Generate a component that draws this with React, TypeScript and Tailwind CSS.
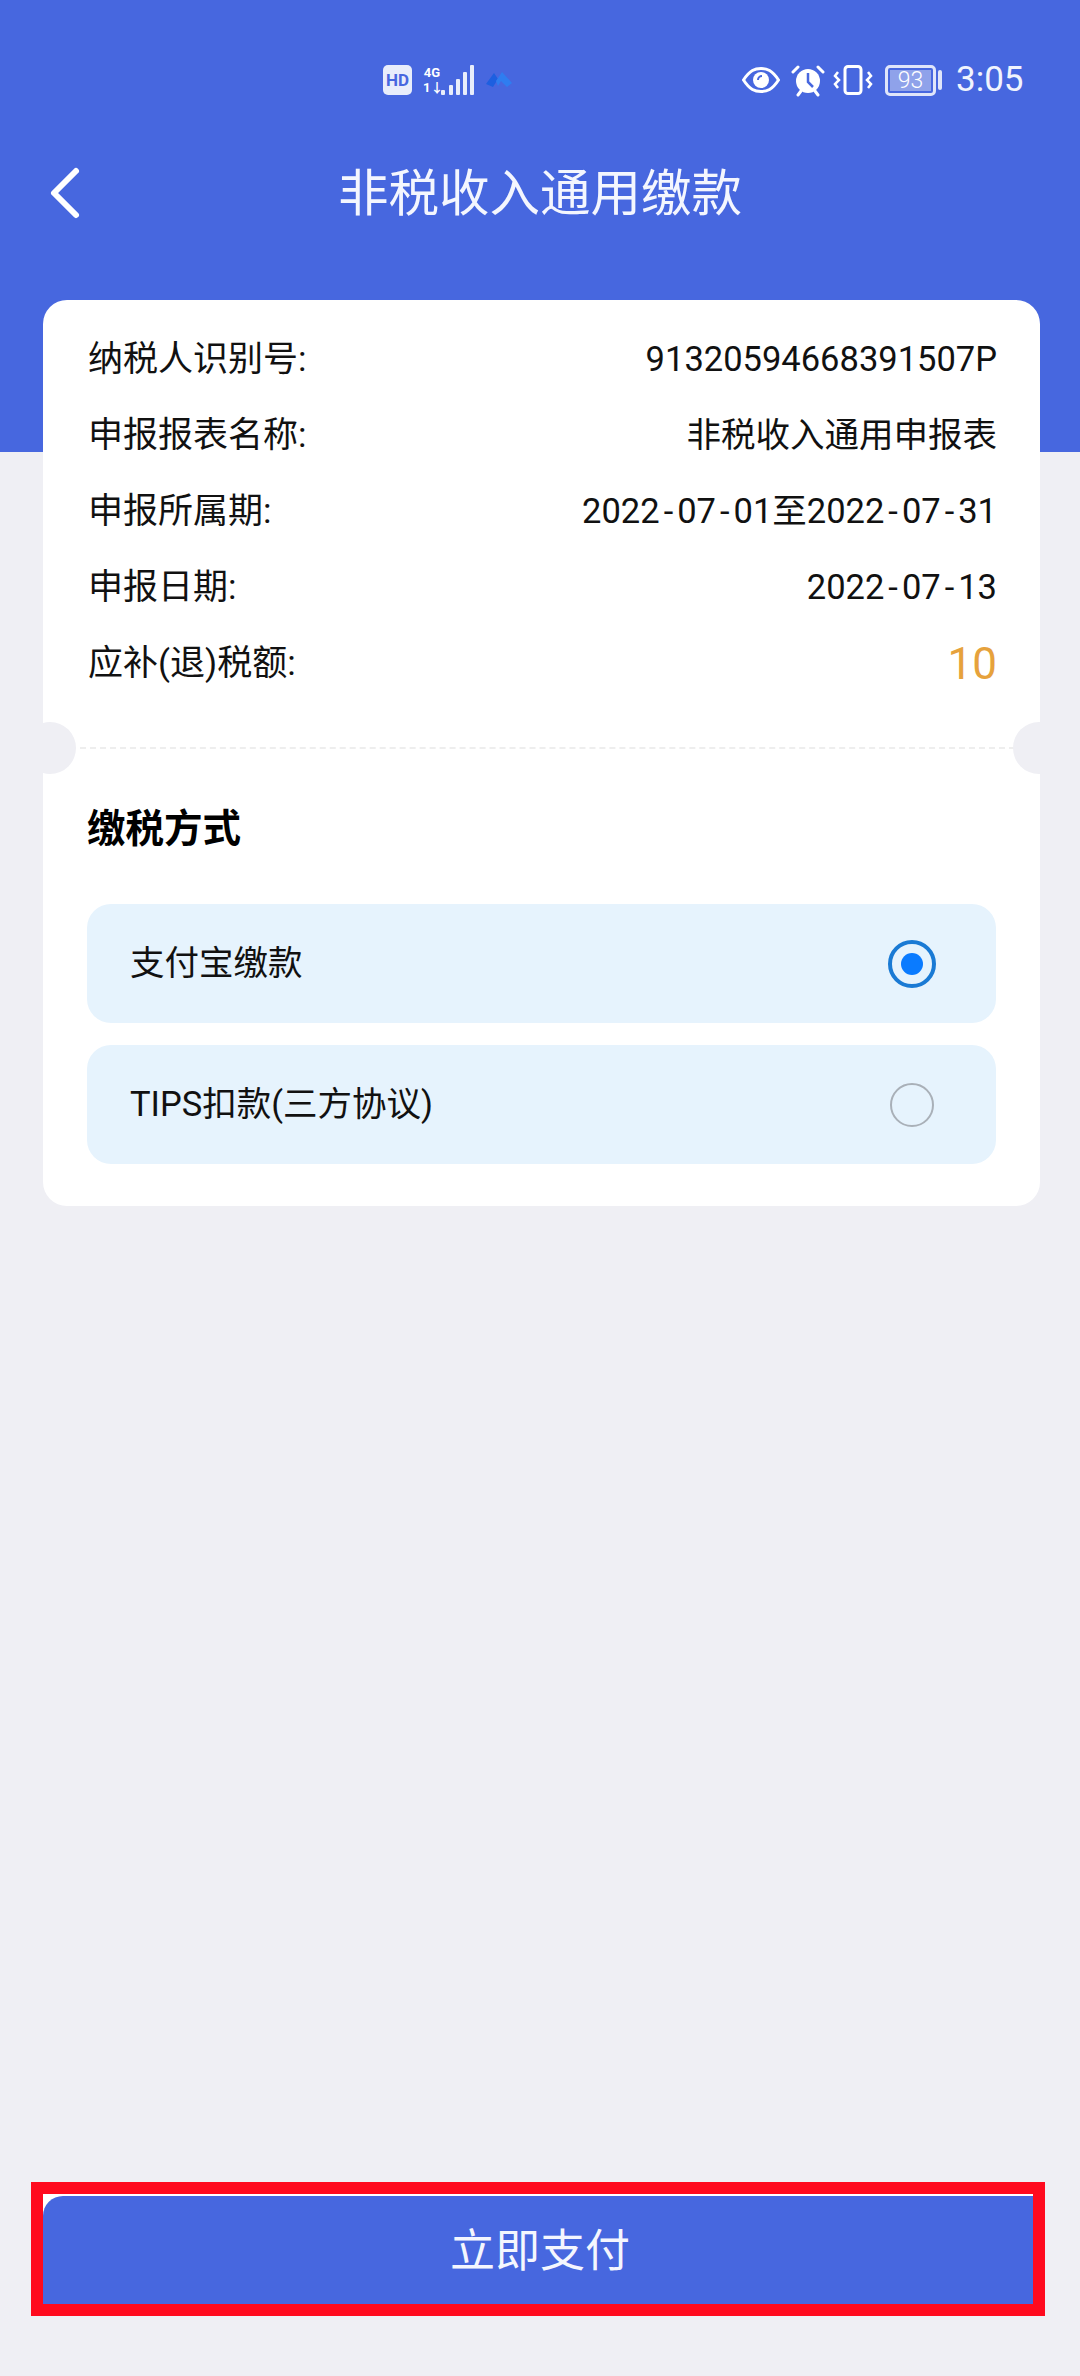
import React from 'react';

const fontStack = "font-['Roboto','Noto_Sans_CJK_SC',sans-serif]";

const rows = [
  { label: '纳税人识别号:', value: '91320594668391507P' },
  { label: '申报报表名称:', value: '非税收入通用申报表' },
  { label: '申报所属期:', value: '2022-07-01至2022-07-31' },
  { label: '申报日期:', value: '2022-07-13' },
];

// hyphens in the dates are wider than Roboto's own
const Value: React.FC<{ text: string }> = ({ text }) => (
  <span className="text-[34.5px]">
    {text.split('-').map((part, i) => (
      <React.Fragment key={i}>
        {i > 0 && <span className="px-[4px]">-</span>}
        {part}
      </React.Fragment>
    ))}
  </span>
);

const StatusBar: React.FC = () => (
  <div className="h-[110px] pt-[65px] flex items-start text-white">
    <div className="ml-[383px] w-[29px] h-[30px] rounded-[5px] bg-[#e8edfb] text-[#4767df] text-[17px] leading-[30px] font-bold text-center">
      HD
    </div>
    <div className="ml-[11px] w-[18px] flex flex-col text-[13px] leading-[15px] font-bold text-center">
      <span>4G</span>
      <span>1↓</span>
    </div>
    <svg width="34" height="30" viewBox="0 0 34 30" fill="#e8edfb">
      <rect x="0" y="25" width="4" height="5" rx="1" />
      <rect x="8" y="20" width="4" height="10" rx="1" />
      <rect x="15" y="14" width="4" height="16" rx="1" />
      <rect x="22" y="7" width="4" height="23" rx="1" />
      <rect x="29" y="0" width="4" height="30" rx="1" />
    </svg>
    <svg width="26" height="15" viewBox="0 0 26 15" className="ml-[11px] mt-[7px]">
      <path d="M0 12 L8 1 L12 7 L7 15 Z" fill="#1d5fe0" />
      <path d="M10 9 L16 0 L26 11 L21 15 L15 9 L12 14 Z" fill="#2f7df0" />
    </svg>
    <svg width="38" height="26" viewBox="0 0 38 26" className="ml-[230px] mt-[2px]" fill="none">
      <path d="M1.5 13 C8 3 13 1.5 19 1.5 C25 1.5 30 3 36.5 13 C30 23 25 24.5 19 24.5 C13 24.5 8 23 1.5 13 Z" stroke="#fff" strokeWidth="3" />
      <circle cx="19" cy="13" r="8" fill="#fff" />
      <path d="M16 13 a4 4 0 0 1 4 -4" stroke="#4767df" strokeWidth="2" />
    </svg>
    <svg width="36" height="32" viewBox="0 0 36 32" className="ml-[10px]" fill="none">
      <circle cx="18" cy="16" r="12" fill="#fff" />
      <path d="M18 8 V17 L23 22" stroke="#4767df" strokeWidth="2.5" />
      <path d="M3 7 L8 2 M33 7 L28 2" stroke="#fff" strokeWidth="3" strokeLinecap="round" />
      <path d="M8 30 L11 26 M28 30 L25 26" stroke="#fff" strokeWidth="3" strokeLinecap="round" />
    </svg>
    <svg width="40" height="30" viewBox="0 0 40 30" className="ml-[7px]" fill="none" stroke="#fff">
      <rect x="12" y="1.5" width="16" height="27" rx="3" strokeWidth="3" />
      <path d="M5 7 L2 11 L6 15 L2 19 L5 23 M35 7 L38 11 L34 15 L38 19 L35 23" strokeWidth="2.5" />
    </svg>
    <div className="ml-[12px] w-[51px] h-[31px] rounded-[5px] border-[3px] border-[#dfe5fa] p-[2px]">
      <div className="h-full bg-[#8fa2ea] text-[23px] leading-[21px] font-light text-center text-white">93</div>
    </div>
    <div className="ml-[2px] mt-[5px] w-[4px] h-[20px] rounded-[2px] bg-[#dfe5fa]" />
    <span className="ml-[14px] -mt-[3px] text-[35px] leading-[36px] text-[#f1f4fd]">3:05</span>
  </div>
);

const Radio: React.FC<{ checked?: boolean }> = ({ checked }) =>
  checked ? (
    <div className="w-[48px] h-[48px] rounded-full border-[4px] border-[#1a7ad4] flex items-center justify-center">
      <div className="w-[22px] h-[22px] rounded-full bg-[#0a7bff]" />
    </div>
  ) : (
    <div className="w-[44px] h-[44px] rounded-full border-2 border-[#a9b0b8]" />
  );

const PayOption: React.FC<{ label: string; checked?: boolean }> = ({ label, checked }) => (
  <div className="h-[119px] rounded-[24px] bg-[#e6f3fd] pl-[43px] flex items-center justify-between">
    <span className="text-[34.5px] text-[#111]">{label}</span>
    <div className="w-[48px] mr-[60px] flex justify-center">
      <Radio checked={checked} />
    </div>
  </div>
);

export default function App() {
  return (
    <div className={`${fontStack} relative w-[1080px] h-[2376px] bg-[#efeff4] flex flex-col overflow-hidden`}>
      <div className="h-[452px] shrink-0 bg-[#4767df]">
        <StatusBar />
        <div className="relative h-[166px] flex items-start justify-center pt-[50px]">
          <svg width="34" height="54" viewBox="0 0 34 54" fill="none" className="absolute left-[48px] top-[56px]">
            <path d="M28 5 L6 27 L28 49" stroke="#fff" strokeWidth="6" strokeLinecap="round" strokeLinejoin="round" />
          </svg>
          <h1 className="text-[50.5px] leading-[68px] text-[#f4f6fe] font-normal">非税收入通用缴款</h1>
        </div>
      </div>

      <div className="relative -mt-[152px] mx-[43px] w-[997px] h-[906px] shrink-0 rounded-[24px] bg-white overflow-hidden">
        <div className="pt-[22px] pl-[45px] pr-[43px]">
          {rows.map((row) => (
            <div key={row.label} className="h-[76px] flex items-center justify-between text-[35px] text-[#111]">
              <span>{row.label}</span>
              <Value text={row.value} />
            </div>
          ))}
          <div className="h-[76px] flex items-center justify-between text-[35px] text-[#111]">
            <span>应补(退)税额:</span>
            <span className="text-[44px] text-[#e6a23c]">10</span>
          </div>
        </div>
        <div className="absolute -left-[19px] top-[422px] w-[52px] h-[52px] rounded-full bg-[#efeff4]" />
        <div className="absolute -right-[25px] top-[422px] w-[52px] h-[52px] rounded-full bg-[#efeff4]" />
        <div className="mt-[45px] ml-[37px] w-[935px] border-t-2 border-dashed border-[#eeeeee]" />
        <div className="mt-[54px] px-[44px] w-[997px]">
          <h2 className="text-[38.5px] leading-[52px] font-bold text-[#000]">缴税方式</h2>
          <div className="mt-[49px] flex flex-col gap-[22px] w-[909px]">
            <PayOption label="支付宝缴款" checked />
            <PayOption label="TIPS扣款(三方协议)" />
          </div>
        </div>
      </div>

      <div className="mt-auto mb-[60px] ml-[31px] w-[1014px] h-[134px] shrink-0 border-[12px] border-[#ff0a1e] bg-white pt-[2px]">
        <button className="w-full h-full rounded-tl-[20px] bg-[#4767df] text-[#f4f6fe] text-[45px] font-normal pt-[4px] pl-[4px]">
          立即支付
        </button>
      </div>
    </div>
  );
}
